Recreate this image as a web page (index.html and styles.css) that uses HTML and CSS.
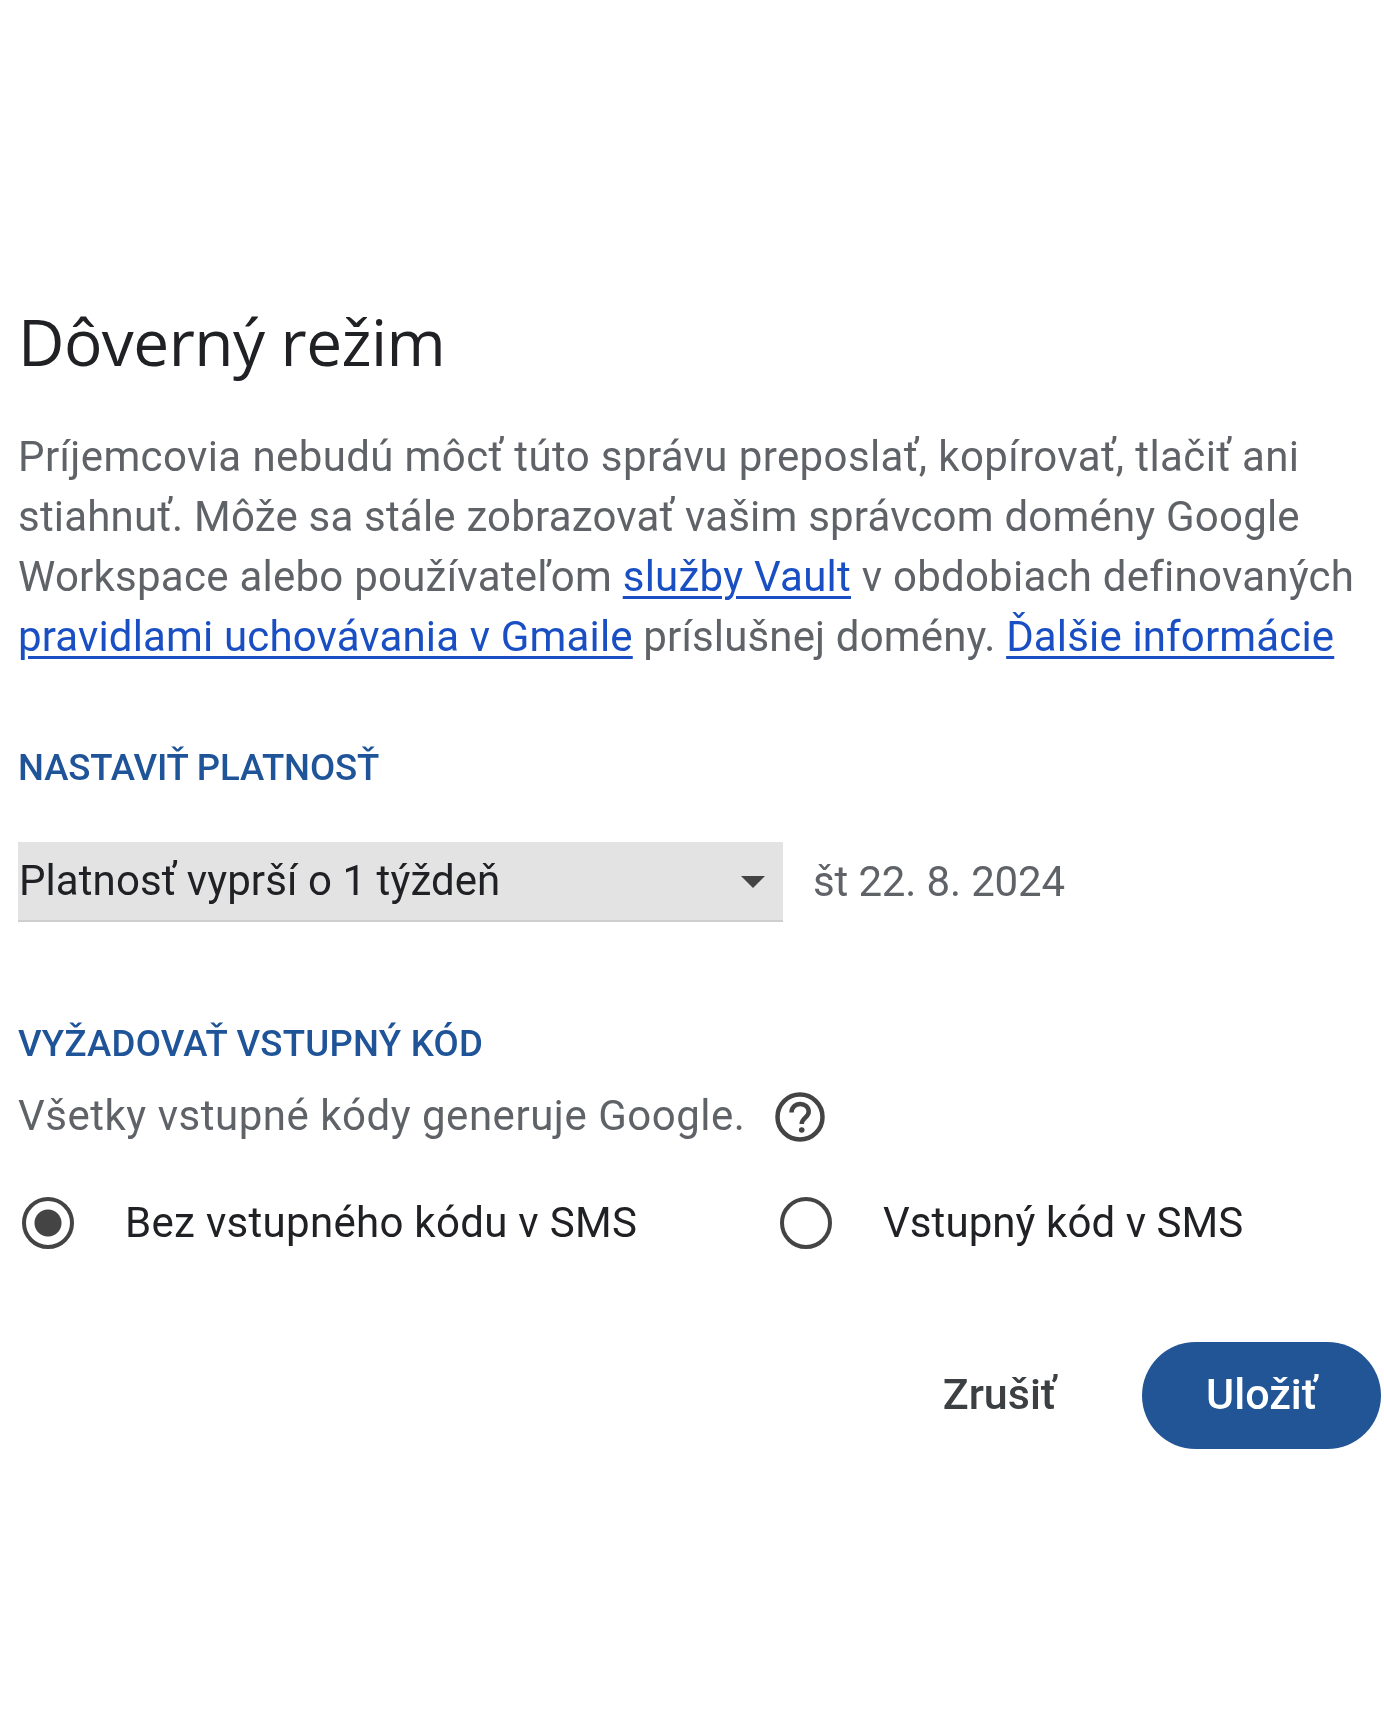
FILE: index.html
```html
<!DOCTYPE html>
<html lang="sk">
<head>
<meta charset="utf-8">
<title>Dôverný režim</title>
<link rel="stylesheet" href="styles.css">
</head>
<body>
<main class="dialog">
  <h1 class="title">Dôverný režim</h1>
  <p class="intro">
    <span class="line l1">Príjemcovia nebudú môcť túto správu preposlať, kopírovať, tlačiť ani</span>
    <span class="line l2">stiahnuť. Môže sa stále zobrazovať vašim správcom domény Google</span>
    <span class="line l3">Workspace alebo používateľom <a href="#">služby Vault</a> v obdobiach definovaných</span>
    <span class="line l4"><a href="#">pravidlami uchovávania v Gmaile</a> príslušnej domény. <a href="#">Ďalšie informácie</a></span>
  </p>
  <h2 class="section first">NASTAVIŤ PLATNOSŤ</h2>
  <div class="expiry">
    <div class="select">
      <span>Platnosť vyprší o 1 týždeň</span>
      <svg class="caret" viewBox="0 0 24 12" aria-hidden="true"><path d="M0 0h24L12 12z"/></svg>
    </div>
    <span class="date">št 22. 8. 2024</span>
  </div>
  <h2 class="section second">VYŽADOVAŤ VSTUPNÝ KÓD</h2>
  <div class="hint">
    <span>Všetky vstupné kódy generuje Google.</span>
    <svg class="help" viewBox="0 0 50 50" aria-hidden="true">
      <circle cx="25" cy="25" r="22.5" fill="none" stroke="#444" stroke-width="4.500"/>
      <path d="M16.500 20.500c0-5 3.800-8.500 8.700-8.500s8.500 3.300 8.500 7.700c0 5.800-7 6.100-7 12.300" fill="none" stroke="#444" stroke-width="4.500"/>
      <circle cx="26.700" cy="38" r="2.800" fill="#444"/>
    </svg>
  </div>
  <div class="radios">
    <label class="radio one"><i class="dot on"></i><span class="label">Bez vstupného kódu v SMS</span></label>
    <label class="radio two"><i class="dot"></i><span class="label">Vstupný kód v SMS</span></label>
  </div>
  <div class="actions">
    <button class="cancel">Zrušiť</button>
    <button class="save">Uložiť</button>
  </div>
</main>
</body>
</html>
```
FILE: styles.css
```css
* { box-sizing: border-box; }
html, body { margin: 0; background: #fff; }
body { width: 1384px; height: 1730px; overflow: hidden; font-family: Roboto, "Liberation Sans", sans-serif; }
.dialog { padding: 302px 0 0 18px; filter: blur(0.5px); }
.title { margin: 0; font: 400 64px/80px "Open Sans", Roboto, sans-serif; color: #202124; letter-spacing: -0.550px; }
.intro { margin: 45px 0 0; font-size: 42px; line-height: 60px; color: #5f6368; white-space: nowrap; }
.line { display: block; }
.l1 { letter-spacing: 0.390px; }
.l2 { letter-spacing: 0.200px; }
.l3 { letter-spacing: 0.250px; }
.l4 { letter-spacing: 0.150px; }
.intro a { color: #1a4fc4; text-decoration: underline; text-decoration-thickness: 3px; text-underline-offset: 5px; }
.section { margin: 0; font-size: 36.600px; line-height: 44px; font-weight: 500; color: #1f5499; white-space: nowrap; }
.section.first { margin-top: 79px; letter-spacing: -0.130px; }
.section.second { margin-top: 100px; letter-spacing: 0.250px; }
.expiry { display: flex; align-items: center; margin-top: 52px; }
.select { display: flex; align-items: center; justify-content: space-between; width: 765px; height: 80px; padding: 0 18px 1px 1px; background: #e3e3e3; border-bottom: 2px solid #cfcfcf; font-size: 42px; letter-spacing: 0.080px; color: #202124; }
.caret { width: 24px; height: 12px; margin-top: 3px; fill: #444; }
.date { margin: 0 0 1px 30px; font-size: 42px; letter-spacing: -0.150px; color: #5f6368; }
.hint { display: flex; align-items: center; margin-top: 23px; font-size: 42px; letter-spacing: 0.520px; color: #5f6368; }
.help { width: 50px; height: 50px; margin: 3px 0 0 30px; }
.radios { display: flex; margin-top: 55px; }
.radio { display: flex; align-items: center; font-size: 42px; color: #202124; }
.label { margin-bottom: 2px; }
.radio.one { width: 758px; letter-spacing: 0.300px; }
.radio.two { letter-spacing: 0.080px; }
.dot { display: block; width: 52px; height: 52px; margin: 0 51px 0 4px; border: 4.500px solid #444; border-radius: 50%; }
.dot.on { background: radial-gradient(circle, #444 0 13px, transparent 14px); }
.actions { display: flex; justify-content: flex-end; align-items: center; width: 1363px; margin-top: 93px; }
.actions button { border: 0; font: 500 43px Roboto, sans-serif; background: none; }
.cancel { color: #3c4043; margin: 0 86px 4px 0; padding: 0; }
.save { width: 239px; height: 107px; padding: 0 0 4px; border-radius: 54px; background: #225596 !important; color: #fff; }
```
